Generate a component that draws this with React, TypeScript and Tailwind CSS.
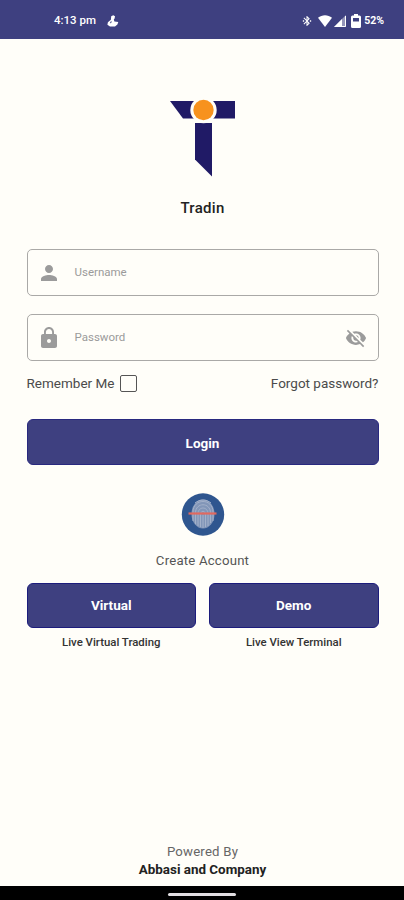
import type { ReactNode } from "react";
import { MdBluetoothConnected, MdLock, MdPerson, MdVisibilityOff } from "react-icons/md";

const accounts = [
  { label: "Virtual", desc: "Live Virtual Trading" },
  { label: "Demo", desc: "Live View Terminal" },
];

function StatusBar() {
  return (
    <header className="flex h-[39px] shrink-0 items-center bg-[#3e4080] pt-0.5 pl-[54px] pr-5 text-white">
      <span className="text-[11.5px] font-medium">4:13 pm</span>
      <svg className="ml-[11px]" width="12" height="12" viewBox="0 0 12 12" fill="currentColor">
        <path d="M4.2 1.2 6.3.2 8 1.3 7.6 3.4 6.8 4.5 7.4 6.5 11.3 7 10.4 9.6 8 11.4H3L.4 9.8l.5-2.5 3-2.5Z" />
        <path d="m3 7 2-.7L3.8 8.5Z" fill="#3e4080" />
      </svg>
      <div className="ml-auto flex items-center">
        <MdBluetoothConnected className="size-3" />
        <svg className="ml-[5px]" width="14" height="12" viewBox="0 0 14 12" fill="currentColor">
          <path d="M0 2.8C4-.7 10-.7 14 2.8L7 12Z" />
        </svg>
        <svg className="ml-0.5" width="12" height="12" viewBox="0 0 12 12" fill="currentColor">
          <path d="M12 0v12H0Z" fillOpacity=".45" />
          <path d="M8 4v8H0Z" />
          <path d="M11.5 1v10.5H1" fill="none" stroke="currentColor" />
        </svg>
        <svg className="ml-[5px]" width="10" height="14" viewBox="0 0 10 14" fill="currentColor">
          <path d="M3 0h4v1.500h1.500Q10 1.500 10 3v9.500q0 1.500-1.500 1.500h-7Q0 14 0 12.500V3q0-1.500 1.500-1.500H3Z" />
          <path d="M2 4h6v3.500H2Z" fill="#3e4080" />
        </svg>
        <span className="ml-[3px] text-[10.5px] font-bold">52%</span>
      </div>
    </header>
  );
}

function Logo() {
  return (
    <svg className="mt-[58px] shrink-0" width="66" height="80" viewBox="0 0 66 80">
      <path d="M0 4h65v17.500H13Z" fill="#201a66" />
      <path d="M25 26h17v53.500l-17-17Z" fill="#201a66" />
      <circle cx="33.500" cy="13" r="13.200" fill="#fffef9" />
      <circle cx="33.500" cy="13" r="10.200" fill="#f7921e" />
    </svg>
  );
}

function Field({ icon, label, trailing }: { icon: ReactNode; label: string; trailing?: ReactNode }) {
  return (
    <label className="flex h-[47px] w-full items-center rounded-[5px] border border-[#aaa9a7] pl-[9px] pr-[11px] text-[#9b9b9b]">
      {icon}
      <span className="ml-3.5 flex-1 text-[11.5px]">{label}</span>
      {trailing}
    </label>
  );
}

function Fingerprint() {
  return (
    <svg className="mt-7 shrink-0" width="44" height="43" viewBox="0 0 44 43" fill="none">
      <circle cx="22" cy="21.500" r="21.200" fill="#2f568f" />
      <ellipse cx="22" cy="21" rx="11.500" ry="14.500" fill="#8296b8" />
      <g stroke="#a3b1ca" strokeWidth="1">
        <path d="M12 28V19c0-14 20-14 20 0v9" />
        <path d="M14.500 31V20c0-11 15-11 15 0v10" />
        <path d="M17 33V21c0-8 10-8 10 0v12" />
        <path d="M19.500 34V22c0-5 5-5 5 0v12M22 22v13" />
        <path d="M14 10c5-4 11-4 16 0" />
      </g>
      <path d="M7.500 20.500h28" stroke="#e1695f" strokeWidth="2.200" />
    </svg>
  );
}

export default function App() {
  return (
    <div className="flex h-[900px] w-[404px] flex-col overflow-hidden bg-[#fffef9] font-[Roboto,sans-serif]">
      <StatusBar />

      <main className="flex flex-1 flex-col items-center pl-[26.500px] pr-[25.500px]">
        <Logo />
        <h1 className="mt-[21px] text-[15px] leading-5 font-medium tracking-[0.3px] text-[#222]">Tradin</h1>

        <form className="mt-[31px] flex w-full flex-col">
          <Field label="Username" icon={<MdPerson className="size-6" />} />
          <div className="h-[18px]" />
          <Field
            label="Password"
            icon={<MdLock className="size-6" />}
            trailing={<MdVisibilityOff className="size-[22px]" />}
          />
          <div className="mt-3 flex h-5 items-center justify-between text-[13.500px] text-[#4b4b4b]">
            <label className="flex items-center">
              Remember Me
              <span className="ml-1.5 size-[17px] rounded-[2px] border-[1.500px] border-[#555]" />
            </label>
            <span className="pt-px">Forgot password?</span>
          </div>
          <button
            type="button"
            className="mt-[26px] h-[46px] rounded-md border border-[#29297f] bg-[#3e4080] pt-0.5 text-[13.500px] font-bold text-white"
          >
            Login
          </button>
        </form>

        <Fingerprint />
        <p className="mt-[15px] text-[13.200px] leading-5 tracking-[0.200px] text-[#555]">Create Account</p>

        <div className="mt-3 grid w-full grid-cols-2 gap-[13px]">
          {accounts.map((account) => (
            <div key={account.label} className="flex flex-col items-center">
              <button
                type="button"
                className="h-[45px] w-full rounded-md border border-[#1c1c7c] bg-[#3e4080] text-[13.500px] font-bold text-white"
              >
                {account.label}
              </button>
              <span className="mt-1.5 text-[11.400px] leading-4 font-medium text-[#333]">{account.desc}</span>
            </div>
          ))}
        </div>

        <footer className="mt-auto mb-[7px] text-center leading-[18px]">
          <p className="text-[13.200px] tracking-[0.200px] text-[#666]">Powered By</p>
          <p className="text-[13.400px] font-bold text-[#222]">Abbasi and Company</p>
        </footer>
      </main>

      <div className="flex h-[14px] shrink-0 items-center justify-center bg-black pt-0.5">
        <div className="h-[3px] w-[68px] rounded-sm bg-[#e2dfe2]" />
      </div>
    </div>
  );
}
